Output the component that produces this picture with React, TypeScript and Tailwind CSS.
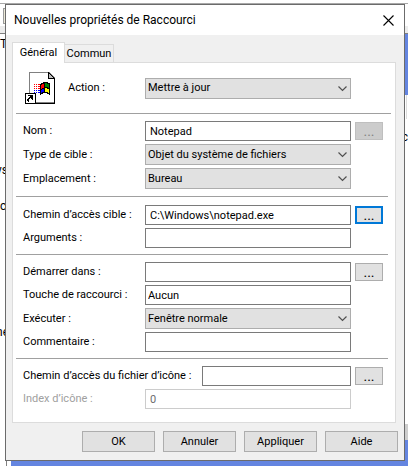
import React, { useId } from "react";

const FONT = "font-[Roboto,sans-serif]";

function Field({ label, children, disabled = false }: { label: string; children: (id: string) => React.ReactNode; disabled?: boolean }) {
  const id = useId();
  return (
    <div className="flex items-center">
      <label htmlFor={id} className={`w-[122px] shrink-0 whitespace-nowrap ${disabled ? "text-[#a0a0a0]" : ""}`}>
        {label}
      </label>
      {children(id)}
    </div>
  );
}

function TextBox({ id, value = "", tight = false, disabled = false }: { id: string; value?: string; tight?: boolean; disabled?: boolean }) {
  return (
    <input
      id={id}
      type="text"
      defaultValue={value}
      disabled={disabled}
      className={`h-5 min-w-0 flex-1 border bg-white outline-none ${tight ? "pl-0.5" : "pl-1"} ${
        disabled ? "border-[#cccccc] text-[#6d6d6d]" : "border-[#7a7a7a]"
      }`}
    />
  );
}

function Choice({ id, value }: { id: string; value: string }) {
  return (
    <div className="relative h-[21px] min-w-0 flex-1">
      <select id={id} className="block h-full w-full appearance-none border border-[#adadad] bg-[#e1e1e1] pl-0.5 outline-none">
        <option>{value}</option>
      </select>
      <svg className="pointer-events-none absolute top-2 right-1 h-[6px] w-[9px]" viewBox="0 0 9 6" fill="none" stroke="#505050" strokeWidth="1.2">
        <path d="M0.5 0.5 L4.5 4.5 L8.5 0.5" />
      </svg>
    </div>
  );
}

function Browse({ label, focused = false, disabled = false }: { label: string; focused?: boolean; disabled?: boolean }) {
  return (
    <button
      type="button"
      aria-label={label}
      disabled={disabled}
      className={`ml-1 flex h-[18px] w-7 shrink-0 items-center justify-center text-sm leading-none ${
        focused
          ? "border-2 border-[#0078d7] bg-[#e1e1e1]"
          : disabled
            ? "border border-[#bfbfbf] bg-[#cccccc] text-[#838383]"
            : "border border-[#adadad] bg-[#e1e1e1]"
      }`}
    >
      ...
    </button>
  );
}

function Spacer() {
  return <span className="ml-1 w-7 shrink-0" />;
}

function ShortcutIcon() {
  return (
    <svg className="h-8 w-8 shrink-0" viewBox="0 0 32 32" shapeRendering="crispEdges">
      <path d="M4 0H24L30 6V31H4Z" fill="#808080" />
      <path d="M5 1H23L29 7V30H5Z" fill="#fff" />
      <path d="M29 6h1v26H4v-1h25z" fill="#000" />
      <path d="M23 0h1v1h1v1h1v1h1v1h1v1h1v1h1v1h-7z" fill="#000" />
      <path d="M24 2h1v1h1v1h1v1h1v1h-4z" fill="#c0c0c0" />
      <path d="M15 12h1v-1h2v-1h5v1h2v12h-1v-1h-2v-1h-4v1h-2v1h-1z" fill="#000" />
      <path d="M16 13h1v-1h2v4h-2v1h-1z" fill="#f00" />
      <path d="M20 11h2v1h2v4h-1v-1h-3z" fill="#008000" />
      <path d="M16 18h1v-1h2v3h-2v1h-1z" fill="#00f" />
      <path d="M20 16h2v1h2v4h-1v-1h-3z" fill="#ff0" />
      <path d="M9 12h1v1H9zM11 12h1v1h-1zM13 12h2v1h-2zM9 14h1v1H9zM11 14h1v1h-1zM13 14h2v1h-2zM9 16h1v1H9zM11 16h1v1h-1zM13 16h2v1h-2z" fill="#f00" />
      <path d="M9 18h1v1H9zM11 18h1v1h-1zM13 18h2v1h-2zM9 20h1v1H9zM11 20h1v1h-1zM13 20h2v1h-2z" fill="#00f" />
      <path d="M0 21h11v11H0z" fill="#000" />
      <path d="M1 22h9v9H1z" fill="#fff" />
      <path d="M3 23h5v5h-1v-1h-1v-1h-1v1h-1v3H3v-1h-1v-2h1v-1h1v-1h1v-1H3z" fill="#000" />
    </svg>
  );
}

function BackgroundWindow() {
  return (
    <div aria-hidden="true" className="absolute inset-0 overflow-hidden bg-white text-xs leading-4">
      <div className="absolute inset-x-0 top-[3px] h-px bg-[#a8a8a8]" />
      <div className="absolute top-2 left-[3px] h-4 w-4 border border-[#9a9a9a] bg-[#ece9d8]" />
      <div className="absolute inset-x-0 top-[26px] h-2 border-b border-[#808080] bg-[#ececec]" />
      <div className="absolute top-[34px] right-0 h-[61px] w-3 bg-[#6485e0]" />
      <div className="absolute top-[95px] right-0 h-6 w-0.5 border-l border-[#dcdcdc]" />
      <div className="absolute top-[424px] right-0 h-4 w-3 bg-[#cdcdcd]" />
      <div className="absolute right-0 bottom-0 h-[26px] w-3 bg-[#6485e0]" />
      <div className="absolute right-0 bottom-0 left-[11px] h-[10px] bg-[#6485e0]" />
      <div className="absolute bottom-0 left-1.5 h-2 w-px bg-[#808080]" />
      <span className="absolute top-9 left-0">T</span>
      <span className="absolute top-[162px] -left-1">ys</span>
      <span className="absolute top-[198px] left-0">ct</span>
      <span className="absolute top-[324px] -left-1">ne</span>
      <span className="absolute top-[129px] right-0">c</span>
    </div>
  );
}

export default function App() {
  return (
    <div className={`relative min-h-screen pt-1 pr-[3px] pl-[5px] text-[11px] leading-4 text-black ${FONT}`}>
      <BackgroundWindow />
      <main className="relative border border-[#6b6b6b] bg-[#f0f0f0] pb-2">
        <header className="flex h-[30px] items-center justify-between bg-white pr-[10px] pl-2">
          <h1 className="text-xs">Nouvelles propriétés de Raccourci</h1>
          <button type="button" aria-label="Fermer">
            <svg className="h-[11px] w-[11px]" viewBox="0 0 11 11" stroke="#000" strokeWidth="1.1">
              <path d="M0.5 0.5 L10.5 10.5 M10.5 0.5 L0.5 10.5" />
            </svg>
          </button>
        </header>

        <div className="px-1.5 pt-[7px] pr-2">
          <div role="tablist" className="flex items-end">
            <button type="button" role="tab" aria-selected="true" className="relative z-10 -mb-px h-[21px] w-[53px] border border-b-0 border-[#dcdcdc] bg-white">
              Général
            </button>
            <button type="button" role="tab" aria-selected="false" className="h-[18px] w-[49px] border border-b-0 border-l-0 border-[#dcdcdc]">
              Commun
            </button>
          </div>

          <section role="tabpanel" className="border border-[#dcdcdc] bg-white pr-1 pb-[13px] pl-[3px]">
            <div className="flex h-[50px] items-center pr-10 pl-[9px]">
              <ShortcutIcon />
              <label htmlFor="action" className="ml-[11px] w-[77px] shrink-0">
                Action :
              </label>
              <Choice id="action" value="Mettre à jour" />
            </div>

            <div className="flex flex-col gap-[3px] border-t border-[#a0a0a0] pt-[7px] pr-2 pb-[7px] pl-[7px]">
              <Field label="Nom :">
                {(id) => (<><TextBox id={id} value="Notepad" /><Browse label="Modifier le nom" disabled /></>)}
              </Field>
              <Field label="Type de cible :">
                {(id) => (<><Choice id={id} value="Objet du système de fichiers" /><Spacer /></>)}
              </Field>
              <Field label="Emplacement :">
                {(id) => (<><Choice id={id} value="Bureau" /><Spacer /></>)}
              </Field>
            </div>

            <div className="mr-[3px] flex flex-col gap-[3px] border-t border-[#a0a0a0] pt-2 pr-[5px] pb-1.5 pl-[7px]">
              <Field label="Chemin d’accès cible :">
                {(id) => (<><TextBox id={id} value="C:\Windows\notepad.exe" /><Browse label="Parcourir la cible" focused /></>)}
              </Field>
              <Field label="Arguments :">
                {(id) => (<><TextBox id={id} /><Spacer /></>)}
              </Field>
            </div>

            <div className="mr-[3px] flex flex-col gap-[3px] border-t border-[#a0a0a0] pt-[7px] pr-[5px] pb-1.5 pl-[7px]">
              <Field label="Démarrer dans :">
                {(id) => (<><TextBox id={id} /><Browse label="Parcourir le dossier de démarrage" /></>)}
              </Field>
              <Field label="Touche de raccourci :">
                {(id) => (<><TextBox id={id} value="Aucun" tight /><Spacer /></>)}
              </Field>
              <Field label="Exécuter :">
                {(id) => (<><Choice id={id} value="Fenêtre normale" /><Spacer /></>)}
              </Field>
              <Field label="Commentaire :">
                {(id) => (<><TextBox id={id} /><Spacer /></>)}
              </Field>
            </div>

            <div className="mr-[3px] flex flex-col gap-[3px] border-t border-[#a0a0a0] pt-[7px] pr-[5px] pl-[7px]">
              <div className="flex items-center">
                <label htmlFor="icone" className="w-[179px] shrink-0 whitespace-nowrap">
                  Chemin d’accès du fichier d’icône :
                </label>
                <TextBox id="icone" />
                <Browse label="Parcourir les icônes" />
              </div>
              <Field label="Index d’icône :" disabled>
                {(id) => (<><TextBox id={id} value="0" disabled /><Spacer /></>)}
              </Field>
            </div>
          </section>
        </div>

        <footer className="flex justify-end gap-2 pt-2 pr-1.5">
          {["OK", "Annuler", "Appliquer", "Aide"].map((name) => (
            <button key={name} type="button" className="h-[21px] w-[73px] border border-[#adadad] bg-[#e1e1e1]">
              {name}
            </button>
          ))}
        </footer>
      </main>
    </div>
  );
}
